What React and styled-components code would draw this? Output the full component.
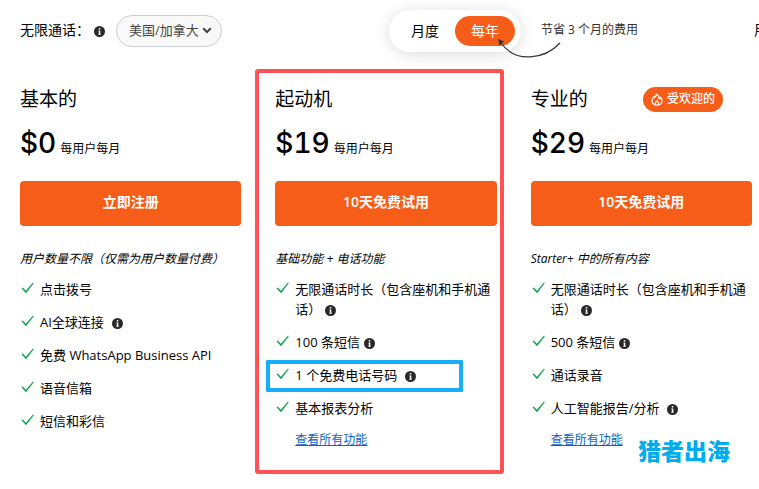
import React, { useState } from 'react';
import styled, { createGlobalStyle } from 'styled-components';

const PLANS = [
  {
    name: '基本的',
    price: '$0',
    cta: '立即注册',
    intro: '用户数量不限（仅需为用户数量付费）',
    features: [
      { text: '点击拨号' },
      { text: 'AI全球连接', info: 'wide' },
      { text: '免费 WhatsApp Business API' },
      { text: '语音信箱' },
      { text: '短信和彩信' },
    ],
  },
  {
    name: '起动机',
    price: '$19',
    cta: '10天免费试用',
    intro: '基础功能 + 电话功能',
    framed: true,
    more: true,
    features: [
      { text: '无限通话时长（包含座机和手机通话）', info: 'tight' },
      { text: '100 条短信', info: 'tight' },
      { text: '1 个免费电话号码', info: 'wide', marked: true },
      { text: '基本报表分析' },
    ],
  },
  {
    name: '专业的',
    price: '$29',
    cta: '10天免费试用',
    intro: 'Starter+ 中的所有内容',
    popular: true,
    more: true,
    features: [
      { text: '无限通话时长（包含座机和手机通话）', info: 'tight' },
      { text: '500 条短信', info: 'tight' },
      { text: '通话录音' },
      { text: '人工智能报告/分析', info: 'wide' },
    ],
  },
];

const Info = ({ space }) => (
  <InfoIcon $space={space} viewBox="0 0 11 11" role="img" aria-label="说明">
    <circle cx="5.5" cy="5.5" r="5.5" fill="#2b2727" />
    <path d="M4.800 2h1.500v1.500H4.800zM4.300 4.400h2v3.400h.5v.9H4.300v-.9h.5V5.300h-.5z" fill="#fff" />
  </InfoIcon>
);

const Check = () => (
  <CheckIcon viewBox="0 0 13 12" aria-hidden="true">
    <path d="M.5 6.300 1.700 5.600 4.900 8.700 12 .6 12.800 1.200 5 11.200z" fill="#12a150" />
  </CheckIcon>
);

const Flame = () => (
  <FlameIcon viewBox="0 0 12 13" aria-hidden="true">
    <path
      d="M5.200 1c.3 1.700-.5 2.500-1.500 3.500-.3-.3-.5-.6-.6-1C1.800 4.800 1 6.300 1 8c0 2.500 2.200 4.200 5 4.200s5-1.700 5-4.200c0-1.600-.8-2.900-1.700-3.900-.1 1-.5 1.500-1.100 1.800C8.200 3.800 7.300 2 5.200 1z"
      fill="none"
      stroke="#fff"
      strokeWidth="1.200"
      strokeLinejoin="round"
    />
    <path d="M4.200 11.800c-.6-1.800.5-2.800 1.800-3.900 1.300 1.100 2.400 2.100 1.800 3.900" fill="none" stroke="#fff" strokeWidth="1.200" />
  </FlameIcon>
);

const Plan = ({ plan }) => (
  <Card $framed={plan.framed}>
    <Heading>
      <Name>{plan.name}</Name>
      {plan.popular && (
        <Popular>
          <Flame />
          受欢迎的
        </Popular>
      )}
    </Heading>
    <PriceRow>
      <Price>{plan.price}</Price>
      <Per>每用户每月</Per>
    </PriceRow>
    <Cta type="button">{plan.cta}</Cta>
    <Intro>{plan.intro}</Intro>
    <Features>
      {plan.features.map((f) => (
        <Feature key={f.text} $marked={f.marked}>
          <Check />
          <span>
            {f.text}
            {f.info && <Info space={f.info} />}
          </span>
        </Feature>
      ))}
    </Features>
    {plan.more && <More href="#features">查看所有功能</More>}
  </Card>
);

const App = () => {
  const [yearly, setYearly] = useState(true);

  return (
    <Page>
      <GlobalStyle />
      <TopBar>
        <Calls>
          <label htmlFor="region">无限通话：</label>
          <Info space="tight" />
          <SelectWrap>
            <Region id="region" defaultValue="us">
              <option value="us">美国/加拿大</option>
            </Region>
            <Chevron viewBox="0 0 10 7" aria-hidden="true">
              <path d="M1.200 1.200 5 5l3.800-3.800" fill="none" stroke="#444" strokeWidth="2" />
            </Chevron>
          </SelectWrap>
        </Calls>
        <Billing>
          <Toggle>
            <Period type="button" $active={!yearly} onClick={() => setYearly(false)}>
              月度
            </Period>
            <Period type="button" $active={yearly} onClick={() => setYearly(true)}>
              每年
            </Period>
          </Toggle>
          <Saving>
            节省 3 个月的费用
            <Arrow viewBox="0 0 66 22" aria-hidden="true">
              <path d="M63 4C48 20 19 25 4 4" fill="none" stroke="#333" strokeWidth="1.200" />
              <path d="M1 0l6 2.500-4.500 4z" fill="#333" />
            </Arrow>
          </Saving>
        </Billing>
        <Users>用</Users>
      </TopBar>
      <Plans>
        {PLANS.map((plan) => (
          <Plan key={plan.name} plan={plan} />
        ))}
      </Plans>
      <Brand>猎者出海</Brand>
    </Page>
  );
};

export default App;

// Styled Components
const GlobalStyle = createGlobalStyle`
  * {
    box-sizing: border-box;
  }
  body {
    margin: 0;
    background: #fff;
    color: #000;
    font-family: 'Open Sans', 'Noto Sans CJK SC', sans-serif;
    font-size: 13px;
    line-height: 20px;
  }
  button,
  select {
    font-family: inherit;
  }
`;

const Page = styled.div`
  position: relative;
  padding: 10px 0 28px 20px;
`;

const TopBar = styled.header`
  display: flex;
  align-items: center;
  height: 42px;
  font-size: 14px;
`;

const Calls = styled.div`
  display: flex;
  align-items: center;
  margin-right: auto;

  label {
    padding-bottom: 2px;
  }
`;

const SelectWrap = styled.div`
  position: relative;
  margin-left: 11px;
`;

const Region = styled.select`
  appearance: none;
  height: 32px;
  padding: 0 22px 2px 12px;
  border: 1px solid #c9ced8;
  border-radius: 16px;
  background: #f9f9f9;
  color: #444;
  font-size: 13px;
`;

const Chevron = styled.svg`
  position: absolute;
  right: 10px;
  top: 12px;
  width: 10px;
  height: 7px;
  pointer-events: none;
`;

const Billing = styled.div`
  display: flex;
  align-items: center;
  gap: 20px;
  margin-right: 116px;
`;

const Toggle = styled.div`
  display: flex;
  padding: 6px;
  border-radius: 21px;
  background: #fff;
  box-shadow: 0 2px 16px rgba(0, 0, 0, 0.14);
`;

const Period = styled.button`
  width: 60px;
  height: 30px;
  padding: 0 0 3px;
  border: none;
  border-radius: 15px;
  background: ${({ $active }) => ($active ? '#f65d18' : 'transparent')};
  color: ${({ $active }) => ($active ? '#fff' : '#000')};
  font-size: 14px;
  cursor: pointer;
`;

const Saving = styled.span`
  position: relative;
  padding-bottom: 2px;
  color: #333;
  font-size: 12px;
  white-space: nowrap;
`;

const Arrow = styled.svg`
  position: absolute;
  left: -44px;
  top: 19px;
  width: 66px;
  height: 22px;
`;

const Users = styled.span`
  width: 5px;
  padding-bottom: 2px;
  overflow: hidden;
  white-space: nowrap;
`;

const Plans = styled.main`
  display: grid;
  grid-template-columns: repeat(3, 1fr);
  gap: 34px;
  padding: 32px 7px 0 0;
`;

const Card = styled.section`
  position: relative;

  ${({ $framed }) =>
    $framed &&
    `
    &::before {
      content: '';
      position: absolute;
      inset: -15px -7px -24px -20px;
      border: 4px solid #ff5254;
      border-radius: 3px;
      pointer-events: none;
    }
  `}
`;

const Heading = styled.div`
  display: flex;
  align-items: center;
  justify-content: space-between;
  height: 30px;
  padding-right: 29px;
`;

const Name = styled.h2`
  margin: 0;
  font-size: 19px;
  font-weight: 400;
`;

const Popular = styled.span`
  display: flex;
  align-items: center;
  gap: 4px;
  height: 25px;
  padding: 0 8px;
  border-radius: 13px;
  background: #f65d18;
  color: #fff;
  font-size: 12px;
  font-weight: 500;
`;

const FlameIcon = styled.svg`
  width: 12px;
  height: 13px;
`;

const PriceRow = styled.div`
  display: flex;
  align-items: baseline;
  gap: 4px;
  height: 40px;
  margin: 11px 0 16px;
`;

const Price = styled.strong`
  font-family: Inter, sans-serif;
  font-size: 28px;
  font-weight: 500;
  font-variant-numeric: tabular-nums;
  line-height: 37px;
`;

const Per = styled.span`
  font-size: 12px;
`;

const Cta = styled.button`
  width: 100%;
  height: 45px;
  padding: 0 0 5px;
  border: none;
  border-radius: 4px;
  background: #f65d18;
  color: #fff;
  font-size: 14px;
  font-weight: 600;
  cursor: pointer;
`;

const Intro = styled.p`
  margin: 23px 0 10px;
  font-size: 12px;
  font-style: italic;
  white-space: nowrap;
`;

const Features = styled.ul`
  display: flex;
  flex-direction: column;
  gap: 13px;
  margin: 0;
  padding: 0;
  list-style: none;
`;

const Feature = styled.li`
  position: relative;
  display: flex;
  gap: 6px;

  ${({ $marked }) =>
    $marked &&
    `
    &::after {
      content: '';
      position: absolute;
      inset: -5px 34px -7px -9px;
      border: 4px solid #16aefc;
      border-radius: 1px;
      pointer-events: none;
    }
  `}
`;

const CheckIcon = styled.svg`
  flex: none;
  width: 13px;
  height: 12px;
  margin: 3px 0 0 1px;
`;

const InfoIcon = styled.svg`
  width: 11px;
  height: 11px;
  margin-left: ${({ $space }) => ($space === 'wide' ? 8 : 4)}px;
  vertical-align: -2px;
`;

const More = styled.a`
  display: inline-block;
  margin: 12px 0 0 20px;
  color: #0f62c0;
  font-size: 12px;
`;

const Brand = styled.div`
  position: absolute;
  right: 29px;
  bottom: 12px;
  color: #00aeef;
  font-size: 23px;
  font-weight: 900;
  line-height: 30px;
`;
